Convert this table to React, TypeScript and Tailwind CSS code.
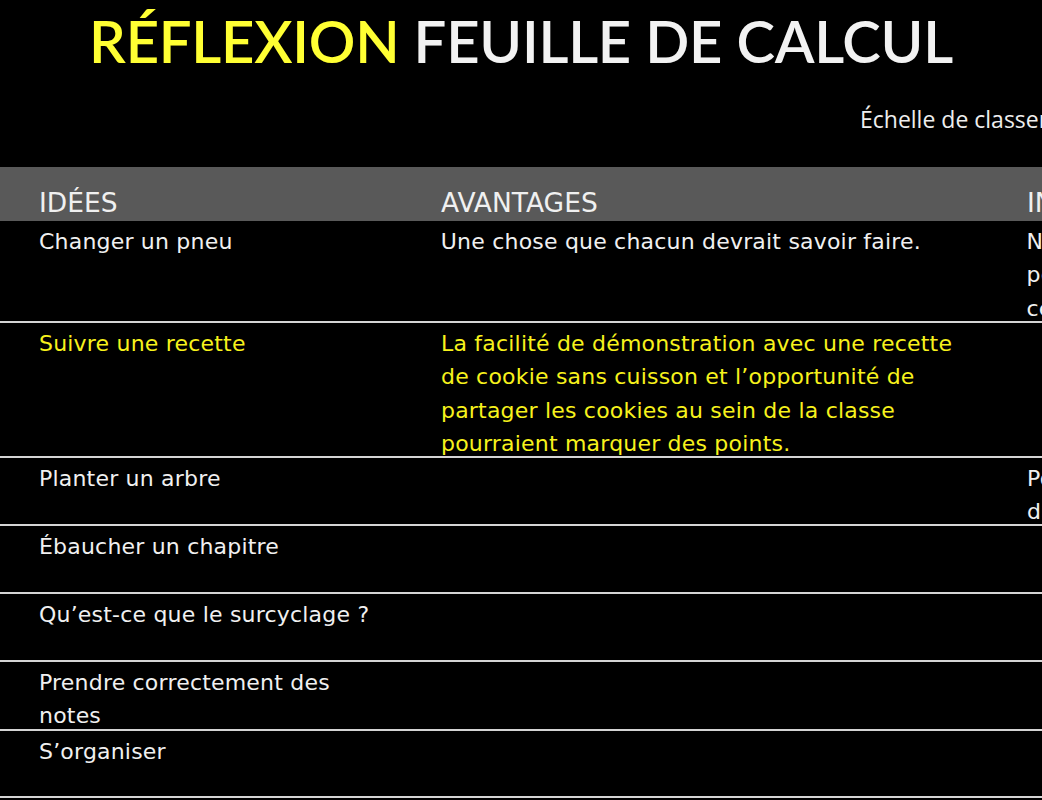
import React from "react";

const body = { fontFamily: '"DejaVu Sans", "Open Sans", sans-serif' };

type Row = { c1: string[]; c2: string[]; c3: string[]; yellow?: boolean; h: string };

const rows: Row[] = [
  {
    c1: ["Changer un pneu"],
    c2: ["Une chose que chacun devrait savoir faire."],
    c3: ["Nécessite une voiture et", "peut-être pas adapté à", "certains élèves"],
    h: "h-[102px]",
  },
  {
    c1: ["Suivre une recette"],
    c2: [
      "La facilité de démonstration avec une recette",
      "de cookie sans cuisson et l’opportunité de",
      "partager les cookies au sein de la classe",
      "pourraient marquer des points.",
    ],
    c3: [],
    yellow: true,
    h: "h-[135px]",
  },
  {
    c1: ["Planter un arbre"],
    c2: [],
    c3: ["Possible uniquement", "dans la cour de l’école"],
    h: "h-[68px]",
  },
  { c1: ["Ébaucher un chapitre"], c2: [], c3: [], h: "h-[68px]" },
  { c1: ["Qu’est-ce que le surcyclage ?"], c2: [], c3: [], h: "h-[68px]" },
  { c1: ["Prendre correctement des", "notes"], c2: [], c3: [], h: "h-[69px]" },
  { c1: ["S’organiser"], c2: [], c3: [], h: "h-[67px]" },
];

function Cell({ lines, className }: { lines: string[]; className: string }) {
  return (
    <div className={className}>
      {lines.map((l, i) => (
        <div key={i} className="whitespace-nowrap leading-[33.3px]">
          {l}
        </div>
      ))}
    </div>
  );
}

export default function App() {
  return (
    <div className="w-[1042px] h-[800px] overflow-hidden bg-black text-white" style={body}>
      <div className="flex justify-center pt-[6px] h-[76px]">
        <h1
          className="text-[58px] leading-[70px] font-semibold tracking-[-0.25px] whitespace-nowrap"
          style={{ fontFamily: '"Lato", "Open Sans", sans-serif' }}
        >
          <span className="text-[#ffff33]">RÉFLEXION</span>{" "}
          <span className="text-[#f2f2f2]">FEUILLE DE CALCUL</span>
        </h1>
      </div>
      <div
        className="h-[91px] pt-[26px] pl-[860px] whitespace-nowrap text-[23px] text-[#eeeeee]"
        style={{ fontFamily: '"Open Sans", sans-serif' }}
      >
        Échelle de classement : 1 = faible, 5 = élevé
      </div>
      <div className="w-[1300px]">
        <div className="flex h-[54px] bg-[#595959] pt-[21px] text-[26.5px] leading-[30px] text-[#f0f0f0]">
          <div className="w-[441px] pl-[39px]">IDÉES</div>
          <div className="w-[586px]">AVANTAGES</div>
          <div className="flex-1">INCONVÉNIENTS</div>
        </div>
        {rows.map((r, i) => (
          <div
            key={i}
            className={`flex ${r.h} pt-[4px] border-b-2 border-[#d4d4d4] text-[22px] tracking-[0.2px] ${
              r.yellow ? "text-[#f7f21c]" : "text-[#f0f0f0]"
            }`}
          >
            <Cell lines={r.c1} className="w-[441px] pl-[39px]" />
            <Cell lines={r.c2} className="w-[586px]" />
            <Cell lines={r.c3} className="flex-1" />
          </div>
        ))}
      </div>
    </div>
  );
}
